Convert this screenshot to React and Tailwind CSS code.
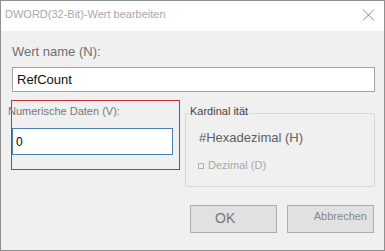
export default function App() {
  return (
    <div className="w-[385px] h-[251px] border border-[#8f8f8f] bg-[#f0f0f0] flex flex-col overflow-hidden font-['Liberation_Sans',Arial,sans-serif]">
      <div className="h-[30px] bg-white flex items-start shrink-0">
        <div className="pl-[4px] pt-[7px] text-[11px] leading-[13px] text-[#a9a9a9]">
          DWORD(32-Bit)-Wert bearbeiten
        </div>
        <svg className="ml-auto mr-[9px] mt-[8px]" width="13" height="12" viewBox="0 0 13 12">
          <path d="M1 0.5 L12 11.5 M12 0.5 L1 11.5" stroke="#8a8a8a" strokeWidth="1" fill="none" />
        </svg>
      </div>
      <div className="flex-1 flex flex-col pl-[11px]">
        <div className="mt-[13px] text-[13px] leading-[15px] text-[#6f6f6f]">Wert name (N):</div>
        <div className="mt-[8px] w-[363px] h-[25px] border border-[#a3a3a3] bg-white flex items-center pl-[4px] text-[13px] text-[#111]">
          RefCount
        </div>
        <div className="mt-[8px] flex items-start -ml-px">
          <div className="w-[169px] h-[70px] border border-[#c8303c] pt-[4px]">
            <div className="-ml-[4px] text-[11px] leading-[13px] text-[#777]">Numerische Daten (V):</div>
            <div className="mt-[10px] w-[161px] h-[27px] border border-[#4a7fae] bg-white flex items-center pl-[3px] text-[12px] text-black">
              0
            </div>
          </div>
          <div className="relative ml-[5px] mt-[13px] w-[190px] h-[74px] border border-[#d8d8d8] pt-[16px]">
            <div className="absolute left-[3px] -top-[9px] px-[1px] bg-[#f0f0f0] text-[11px] leading-[13px] text-[#444]">
              Kardinal ität
            </div>
            <div className="pl-[13px] text-[13px] leading-[15px] text-[#5e5e5e]">#Hexadezimal (H)</div>
            <div className="mt-[14px] pl-[12px] flex items-center gap-[4px] text-[11px] leading-[13px] text-[#a8a8a8]">
              <span className="w-[6px] h-[6px] border border-[#b0b0b0]" />
              <span>Dezimal (D)</span>
            </div>
          </div>
        </div>
        <div className="mt-[18px] flex justify-end gap-[10px] pr-[10px]">
          <div className="w-[87px] h-[28px] border border-[#adadad] bg-[#e1e1e1] flex items-start pt-[4px] pl-[24px] text-[14px] leading-[16px] text-[#777]">
            OK
          </div>
          <div className="w-[87px] h-[28px] border border-[#adadad] bg-[#e1e1e1] flex items-start justify-end pt-[4px] pr-[6px] text-[11px] leading-[13px] text-[#888]">
            Abbrechen
          </div>
        </div>
      </div>
    </div>
  );
}
